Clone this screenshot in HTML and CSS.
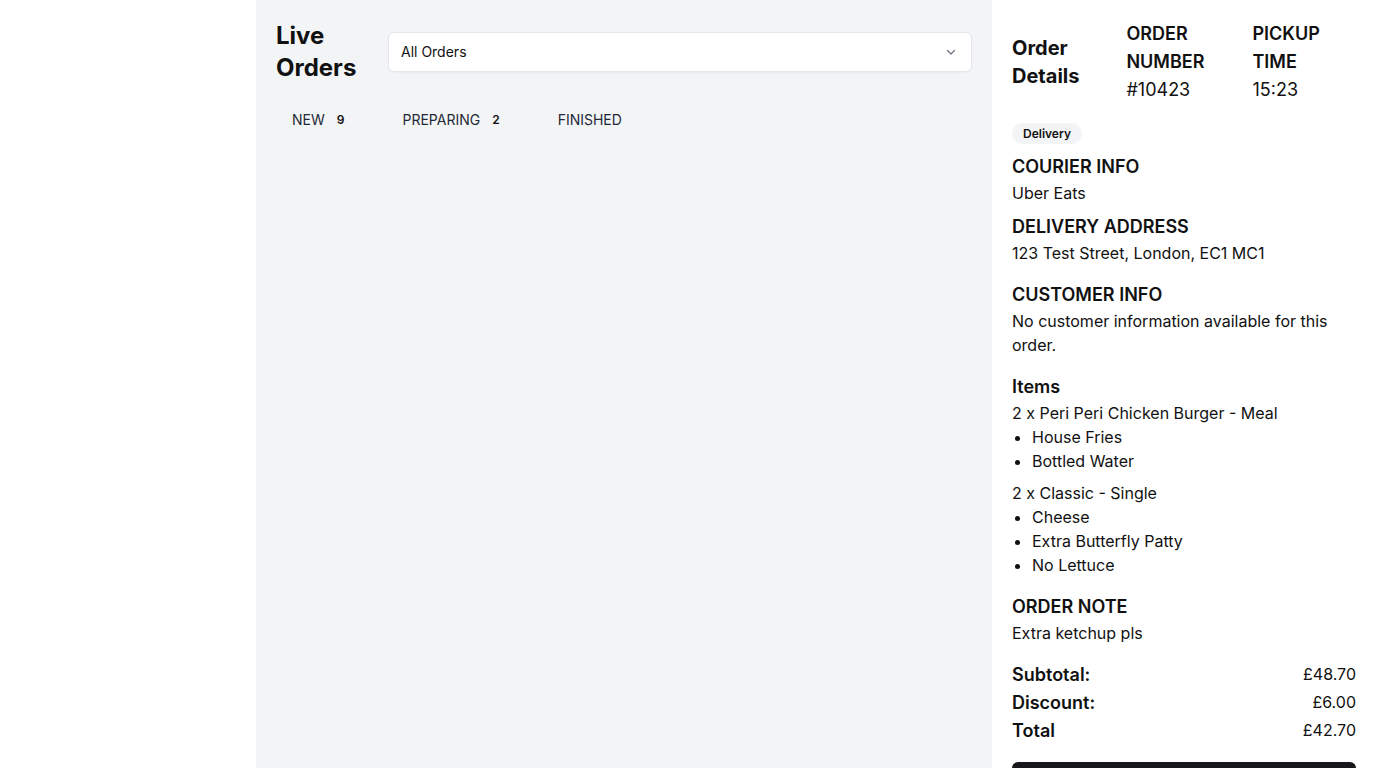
FILE: index.html
```html
<!DOCTYPE html>
<html lang="en">
<head>
<meta charset="utf-8">
<title>Live Orders</title>
<link rel="stylesheet" href="styles.css">
</head>
<body>
<div class="app">
  <aside class="sidebar"></aside>
  <main class="orders">
    <div class="orders-head">
      <h1 class="title">Live Orders</h1>
      <div class="select">
        <span>All Orders</span>
        <svg class="chev" width="12" height="12" viewBox="0 0 12 12" fill="none"><path d="M2.5 4.5L6 8L9.5 4.5" stroke="#6b7280" stroke-width="1.2" stroke-linecap="round" stroke-linejoin="round"/></svg>
      </div>
    </div>
    <nav class="tabs">
      <div class="tab">NEW <span class="count">9</span></div>
      <div class="tab">PREPARING <span class="count">2</span></div>
      <div class="tab">FINISHED</div>
    </nav>
  </main>
  <section class="details">
    <div class="details-head">
      <h2 class="details-title">Order Details</h2>
      <div class="meta">
        <div class="meta-label">ORDER NUMBER</div>
        <div class="meta-value">#10423</div>
      </div>
      <div class="meta">
        <div class="meta-label">PICKUP TIME</div>
        <div class="meta-value">15:23</div>
      </div>
    </div>
    <span class="badge">Delivery</span>
    <div class="block tight first">
      <h3 class="h">COURIER INFO</h3>
      <p class="txt">Uber Eats</p>
    </div>
    <div class="block tight">
      <h3 class="h">DELIVERY ADDRESS</h3>
      <p class="txt">123 Test Street, London, EC1 MC1</p>
    </div>
    <div class="block">
      <h3 class="h">CUSTOMER INFO</h3>
      <p class="txt">No customer information available for this order.</p>
    </div>
    <div class="block">
      <h3 class="h">Items</h3>
      <div class="item">
        <p class="txt">2 x Peri Peri Chicken Burger - Meal</p>
        <ul class="mods"><li>House Fries</li><li>Bottled Water</li></ul>
      </div>
      <div class="item">
        <p class="txt">2 x Classic - Single</p>
        <ul class="mods"><li>Cheese</li><li>Extra Butterfly Patty</li><li>No Lettuce</li></ul>
      </div>
    </div>
    <div class="block">
      <h3 class="h">ORDER NOTE</h3>
      <p class="txt">Extra ketchup pls</p>
    </div>
    <div class="block totals">
      <div class="row"><span class="lbl">Subtotal:</span><span class="amt">£48.70</span></div>
      <div class="row"><span class="lbl">Discount:</span><span class="amt">£6.00</span></div>
      <div class="row"><span class="lbl">Total</span><span class="amt">£42.70</span></div>
    </div>
    <button class="action">Accept Order</button>
  </section>
</div>
</body>
</html>
```
FILE: styles.css
```css
* { box-sizing: border-box; }
html, body { margin: 0; padding: 0; height: 100%; }
body {
  font-family: Inter, "Noto Sans", sans-serif;
  color: #111111;
  background: #ffffff;
  overflow: hidden;
}
.app {
  display: flex;
  height: 100vh;
}
.sidebar {
  width: 256px;
  flex: none;
  background: #ffffff;
}
.orders {
  flex: 1;
  background: #f3f4f6;
  padding: 20px;
}
.orders-head {
  display: flex;
  align-items: center;
  gap: 32px;
}
.title {
  margin: 0;
  font-size: 24px;
  line-height: 32px;
  font-weight: 700;
  width: 80px;
  flex: none;
}
.select {
  flex: 1;
  height: 40px;
  background: #ffffff;
  border: 1px solid #e5e7eb;
  border-radius: 6px;
  box-shadow: 0 1px 2px rgba(0,0,0,0.04);
  display: flex;
  align-items: center;
  justify-content: space-between;
  padding: 0 14px 1px 12px;
  font-size: 14px;
  color: #111;
}
.chev { display: block; }
.tabs {
  display: flex;
  gap: 22px;
  margin-top: 22px;
}
.tab {
  padding: 4px 16px;
  font-size: 14px;
  line-height: 20px;
  color: #1f2937;
  display: flex;
  align-items: center;
}
.count {
  font-size: 12px;
  font-weight: 600;
  margin-left: 8px;
  padding: 0 4px;
  color: #111;
}
.details {
  width: 384px;
  flex: none;
  background: #ffffff;
  padding: 20px;
  overflow: hidden;
}
.details-head {
  display: flex;
  align-items: center;
  gap: 47px;
}
.details-title {
  margin: 0;
  font-size: 20px;
  line-height: 28px;
  font-weight: 700;
  width: min-content;
}
.meta { width: min-content; }
.meta + .meta { margin-left: 1px; }
.meta-label {
  font-size: 18px;
  line-height: 28px;
  font-weight: 600;
}
.meta-value {
  font-size: 18px;
  line-height: 28px;
  font-weight: 400;
}
.badge {
  display: inline-block;
  margin-top: 19px;
  background: #f3f4f6;
  border-radius: 999px;
  padding: 2px 11px;
  font-size: 12px;
  line-height: 17px;
  font-weight: 600;
}
.block { margin-top: 16px; }
.block.tight { margin-top: 8px; }
.block.tight.first { margin-top: 9px; }
.h {
  margin: 0;
  font-size: 18px;
  line-height: 28px;
  font-weight: 600;
}
.txt {
  margin: 0;
  font-size: 16px;
  line-height: 24px;
}
.item + .item { margin-top: 8px; }
.mods {
  margin: 0;
  padding-left: 20px;
  font-size: 16px;
  line-height: 24px;
}
.block.totals { margin-top: 16px; }
.row {
  display: flex;
  justify-content: space-between;
  align-items: flex-start;
}
.lbl {
  font-size: 18px;
  line-height: 28px;
  font-weight: 600;
}
.amt {
  font-size: 16px;
  line-height: 26px;
}
.action {
  display: block;
  width: 100%;
  margin-top: 17px;
  height: 44px;
  border: none;
  border-radius: 6px;
  background: #18181b;
  color: #fff;
  font-family: inherit;
  font-size: 16px;
  font-weight: 600;
}
```
